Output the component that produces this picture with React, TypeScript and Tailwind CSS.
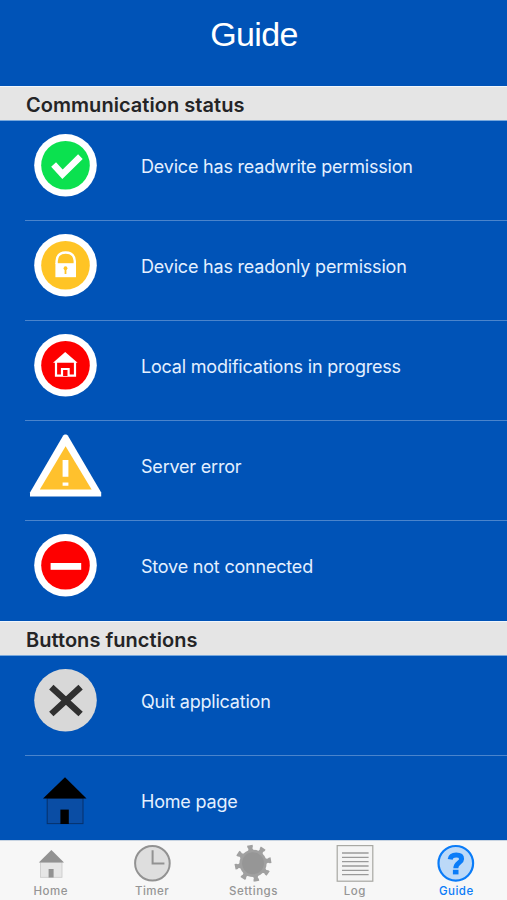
import type { ReactNode } from "react";

interface GuideItem {
    id: string;
    label: string;
    icon: ReactNode;
}

interface Tab {
    id: string;
    label: string;
    icon: ReactNode;
}

function Badge({ fill, children }: { fill: string; children: ReactNode }) {
    return (
        <>
            <circle cx="45.5" cy="40.3" r="31.3" fill="#fff" />
            <circle cx="45.5" cy="40.3" r="24.3" fill={fill} />
            {children}
        </>
    );
}

const statusItems: GuideItem[] = [
    {
        id: "readwrite", label: "Device has readwrite permission",
        icon: (
            <Badge fill="#0be14f">
                <path d="M33.6 39.5L42.5 49.3L60.4 31.7" fill="none" stroke="#fff" strokeWidth="6.6" />
            </Badge>
        ),
    },
    {
        id: "readonly", label: "Device has readonly permission",
        icon: (
            <Badge fill="#ffc425">
                <path d="M36.6 39V36C37 30.5 40.5 27.5 45.7 27.5S54.4 30.5 54.8 36V39" fill="none" stroke="#fff" strokeWidth="2.4" />
                <rect x="35.4" y="38.2" width="20.6" height="14" fill="#fff" />
                <circle cx="45.5" cy="43.2" r="1.9" fill="#ffc425" />
                <path d="M45.5 43V49" stroke="#ffc425" strokeWidth="1.8" />
            </Badge>
        ),
    },
    {
        id: "local", label: "Local modifications in progress",
        icon: (
            <Badge fill="#fe0000">
                <path d="M45.2 27L57.6 37.8H33Z" fill="#fff" />
                <path d="M36 37V50.6H55V37" fill="none" stroke="#fff" strokeWidth="2.2" />
                <path d="M42 51V44H48.6V51" fill="#fe0000" stroke="#fff" strokeWidth="2.2" />
            </Badge>
        ),
    },
    {
        id: "server", label: "Server error",
        icon: (
            <>
                <path d="M43.2 10.6L44.6 9.4H46.4L47.8 10.6L81.2 67.5V71.6H10V67.5Z" fill="#fff" />
                <path d="M45.6 21.2L71.6 64.6H19.8Z" fill="#ffc12d" />
                <path d="M42.6 35H48.4V51.8H42.6ZM42.6 57.5H48.4V60.8H42.6Z" fill="#fff" />
            </>
        ),
    },
    {
        id: "disconnected", label: "Stove not connected",
        icon: (
            <Badge fill="#fe0000">
                <rect x="30.6" y="38" width="30.6" height="6.8" fill="#fff" />
            </Badge>
        ),
    },
];

const buttonItems: GuideItem[] = [
    {
        id: "quit", label: "Quit application",
        icon: (
            <>
                <circle cx="45.5" cy="40.3" r="31.3" fill="#d8d8d8" />
                <path d="M31.3 27.2L60.6 54M60.6 27.2L31.3 54" stroke="#303030" strokeWidth="6.4" />
            </>
        ),
    },
    {
        id: "home", label: "Home page",
        icon: (
            <>
                <rect x="27.2" y="38" width="35.8" height="25.6" fill="#0a4da4" stroke="#06316c" strokeWidth="1" />
                <path d="M45 17.3L66.5 38.6H23Z" fill="#000" />
                <rect x="40.4" y="49.6" width="8.4" height="14.4" fill="#000" />
            </>
        ),
    },
];

const gearTeeth = [-10, 34, 80, 124, 169, 214, 259, 304];

const tabs: Tab[] = [
    {
        id: "home", label: "Home",
        icon: (
            <>
                <rect x="9.5" y="20" width="21.5" height="15.3" fill="#e6e6e6" stroke="#c9c9c9" strokeWidth="0.8" />
                <path d="M20.4 8L33 20.4H7.8Z" fill="#929292" />
                <rect x="17.6" y="27" width="5" height="8.5" fill="#929292" />
            </>
        ),
    },
    {
        id: "timer", label: "Timer",
        icon: (
            <>
                <circle cx="20.4" cy="21.3" r="17.3" fill="#dedede" stroke="#929292" strokeWidth="2" />
                <path d="M20.6 8.2V21.6H32.4" fill="none" stroke="#929292" strokeWidth="2" />
            </>
        ),
    },
    {
        id: "settings", label: "Settings",
        icon: (
            <>
                <circle cx="20" cy="21.3" r="13.6" fill="#a0a0a0" />
                {gearTeeth.map(a => (
                    <path
                        key={a}
                        d="M16.8 10L18 6.4L17.2 4.8V3H22.8V4.8L22 6.4L23.2 10Z"
                        fill="#a0a0a0"
                        transform={`rotate(${a} 20 21.3)`}
                    />
                ))}
                <circle cx="20" cy="21.3" r="11" fill="#969696" />
            </>
        ),
    },
    {
        id: "log", label: "Log",
        icon: (
            <>
                <rect x="2.2" y="3.6" width="35.6" height="35.6" fill="#f4f4f4" stroke="#a8a8a3" strokeWidth="1.2" />
                <path d="M7 11H33.6M7 15.3H33.6M7 19.6H33.6M7 24H33.6M7 28.4H33.6M7 32.7H33.6" stroke="#9a9a9a" strokeWidth="1.3" />
            </>
        ),
    },
    {
        id: "guide", label: "Guide",
        icon: (
            <>
                <circle cx="19.8" cy="21.3" r="17.3" fill="#bcd9f8" stroke="#0a7cf8" strokeWidth="2.2" />
                <path d="M14.2 17.4C14.6 14 16.8 13 20.2 13C23.8 13 25.6 14.6 25.6 16.9C25.6 20.8 19.8 20.6 19.8 26.2" fill="none" stroke="#0a7cf8" strokeWidth="5" />
                <rect x="16.9" y="27.8" width="5.6" height="4.6" fill="#0a7cf8" />
            </>
        ),
    },
];

function Section({ title, items }: { title: string; items: GuideItem[] }) {
    return (
        <section className="shrink-0">
            <h2 className="flex h-[35px] items-center border-y border-t-[#f0f6fc] border-b-[#78a8dc] bg-[#e5e5e5] pt-[3px] pl-[26px] text-[20px] font-semibold tracking-[0.04px] text-[#242426]">
                {title}
            </h2>
            <ul>
                {items.map((item, i) => (
                    <li key={item.id} className="flex h-[100px] flex-col pl-[20px]">
                        <div className="flex h-[99px] items-start gap-[21px] pt-1">
                            <svg width="100" height="80" viewBox="0 0 100 80" className="shrink-0">{item.icon}</svg>
                            <span className="pt-[28px] text-[18px] leading-7 tracking-[-0.2px] whitespace-nowrap text-[#e4f0ff]">{item.label}</span>
                        </div>
                        {i < items.length - 1 && <div className="ml-[5px] h-px bg-[#4a84cc]" />}
                    </li>
                ))}
            </ul>
        </section>
    );
}

export default function App() {
    const active = "guide";

    return (
        <div className="flex h-[900px] w-[507px] flex-col overflow-hidden bg-[#0053b7] font-['Inter',sans-serif]">
            <header className="flex h-[86px] shrink-0 justify-center pt-[13px] pl-px">
                <h1 className="font-['Liberation_Sans',sans-serif] text-[34px] leading-[42px] tracking-[-0.6px] text-white">Guide</h1>
            </header>

            <main className="flex min-h-0 flex-1 flex-col overflow-hidden">
                <Section title="Communication status" items={statusItems} />
                <Section title="Buttons functions" items={buttonItems} />
            </main>

            {/* Tab bar */}
            <nav className="grid h-[60px] shrink-0 grid-cols-5 border-t border-[#c8d4e2] bg-[#f7f7f7] pt-px">
                {tabs.map(tab => (
                    <button
                        key={tab.id}
                        className={`flex flex-col items-center text-[11.5px] leading-[14px] font-medium tracking-[0.5px] ${tab.id === active ? "text-[#0a7cf8]" : "text-[#959595]"}`}
                    >
                        <svg width="40" height="42" viewBox="0 0 40 42" className="shrink-0">{tab.icon}</svg>
                        {tab.label}
                    </button>
                ))}
            </nav>
        </div>
    );
}
